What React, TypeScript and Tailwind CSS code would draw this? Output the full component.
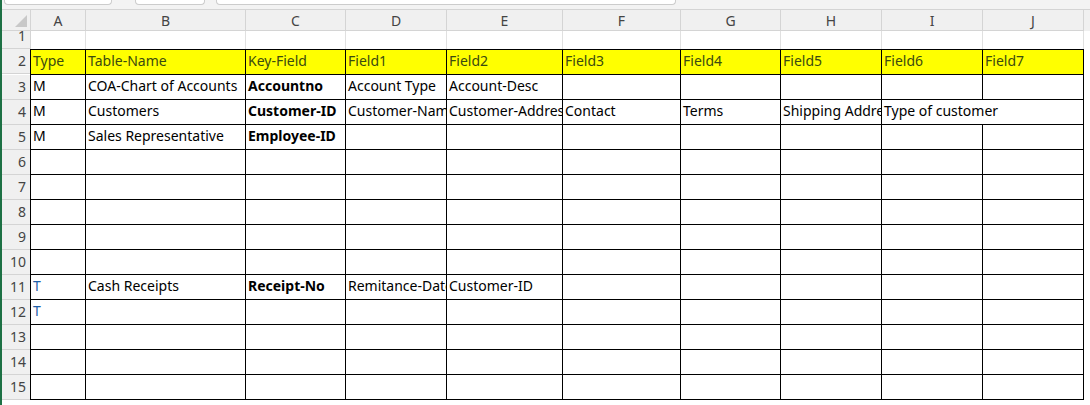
const COLS = ["A", "B", "C", "D", "E", "F", "G", "H", "I", "J"];
const W = [55, 160, 100, 101, 116, 118, 100, 101, 101, 101];

type Cell = { t: string; bold?: boolean; blue?: boolean; span?: number };

const DATA: Record<number, (Cell | null)[]> = {
  3: [{ t: "M" }, { t: "COA-Chart of Accounts" }, { t: "Accountno", bold: true }, { t: "Account Type" }, { t: "Account-Desc" }],
  4: [
    { t: "M" },
    { t: "Customers" },
    { t: "Customer-ID", bold: true },
    { t: "Customer-Name" },
    { t: "Customer-Address" },
    { t: "Contact" },
    { t: "Terms" },
    { t: "Shipping Address" },
    { t: "Type of customer", span: 2 },
  ],
  5: [{ t: "M" }, { t: "Sales Representative" }, { t: "Employee-ID", bold: true }],
  11: [{ t: "T", blue: true }, { t: "Cash Receipts" }, { t: "Receipt-No", bold: true }, { t: "Remitance-Date" }, { t: "Customer-ID" }],
  12: [{ t: "T", blue: true }],
};

const HEAD = ["Type", "Table-Name", "Key-Field", "Field1", "Field2", "Field3", "Field4", "Field5", "Field6", "Field7"];

function RowHead({ n, h }: { n: number; h: number }) {
  return (
    <div
      className="w-[29px] shrink-0 bg-[#f0f0f0] border-b border-r border-[#d4d4d4] flex items-end justify-end pr-[4px] pb-[2px] text-[#444] text-[14px]"
      style={{ height: h }}
    >
      {n}
    </div>
  );
}

function DataRow({ n }: { n: number }) {
  const cells = DATA[n] ?? [];
  const out = [];
  for (let i = 0; i < COLS.length; i++) {
    const c = cells[i];
    const span = c?.span ?? 1;
    const w = W.slice(i, i + span).reduce((a, b) => a + b, 0);
    out.push(
      <div
        key={i}
        className={`h-[25px] shrink-0 border-r border-b border-black overflow-hidden whitespace-nowrap pl-[2px] pt-[1px] text-[14px] leading-[20px] ${c?.bold ? "font-bold" : ""} ${c?.blue ? "text-[#1f5fa8]" : "text-black"}`}
        style={{ width: w }}
      >
        {c?.t}
      </div>,
    );
    i += span - 1;
  }
  return (
    <div className="flex">
      <RowHead n={n} h={25} />
      <div className="flex border-l border-black -ml-px">{out}</div>
    </div>
  );
}

export default function App() {
  return (
    <div className="w-[1090px] h-[405px] overflow-hidden bg-white font-['Open_Sans',sans-serif] text-[14px] border-l-2 border-[#1e7145]">
      <div className="h-[10px] bg-[#f3f3f3] border-b border-[#d4d4d4] flex gap-[3px] items-start">
        <div className="w-[108px] h-[5px] ml-[2px] rounded-b bg-white border border-t-0 border-[#ccc]" />
        <div className="w-[70px] h-[5px] ml-[20px] rounded-b bg-white border border-t-0 border-[#ccc]" />
        <div className="w-[460px] h-[5px] ml-[8px] rounded-b bg-white border border-t-0 border-[#ccc]" />
      </div>
      <div className="flex h-[21px] bg-[#f0f0f0]">
        <div className="w-[29px] shrink-0 border-r border-b border-[#d4d4d4] relative overflow-hidden">
          <div className="absolute right-[3px] bottom-[3px] w-0 h-0 border-l-[12px] border-l-transparent border-b-[12px] border-b-[#c8c8c8]" />
        </div>
        {COLS.map((c, i) => (
          <div
            key={c}
            className="shrink-0 border-r border-b border-[#d4d4d4] flex items-center justify-center text-[#444] text-[14px]"
            style={{ width: W[i] }}
          >
            {c}
          </div>
        ))}
      </div>
      <div className="flex">
        <RowHead n={1} h={18} />
        {COLS.map((c, i) => (
          <div key={c} className="h-[18px] shrink-0 border-r border-[#e0e0e0]" style={{ width: W[i] }} />
        ))}
      </div>
      <div className="flex">
        <RowHead n={2} h={25} />
        <div className="flex border-l border-t border-black -ml-px">
          {HEAD.map((h, i) => (
            <div
              key={h}
              className="h-[25px] shrink-0 bg-[#ffff00] border-r border-b border-black pl-[2px] pt-[1px] text-[14px] leading-[20px] text-[#3b4a10] whitespace-nowrap overflow-hidden"
              style={{ width: W[i] }}
            >
              {h}
            </div>
          ))}
        </div>
      </div>
      {Array.from({ length: 13 }, (_, k) => (
        <DataRow key={k} n={k + 3} />
      ))}
    </div>
  );
}
